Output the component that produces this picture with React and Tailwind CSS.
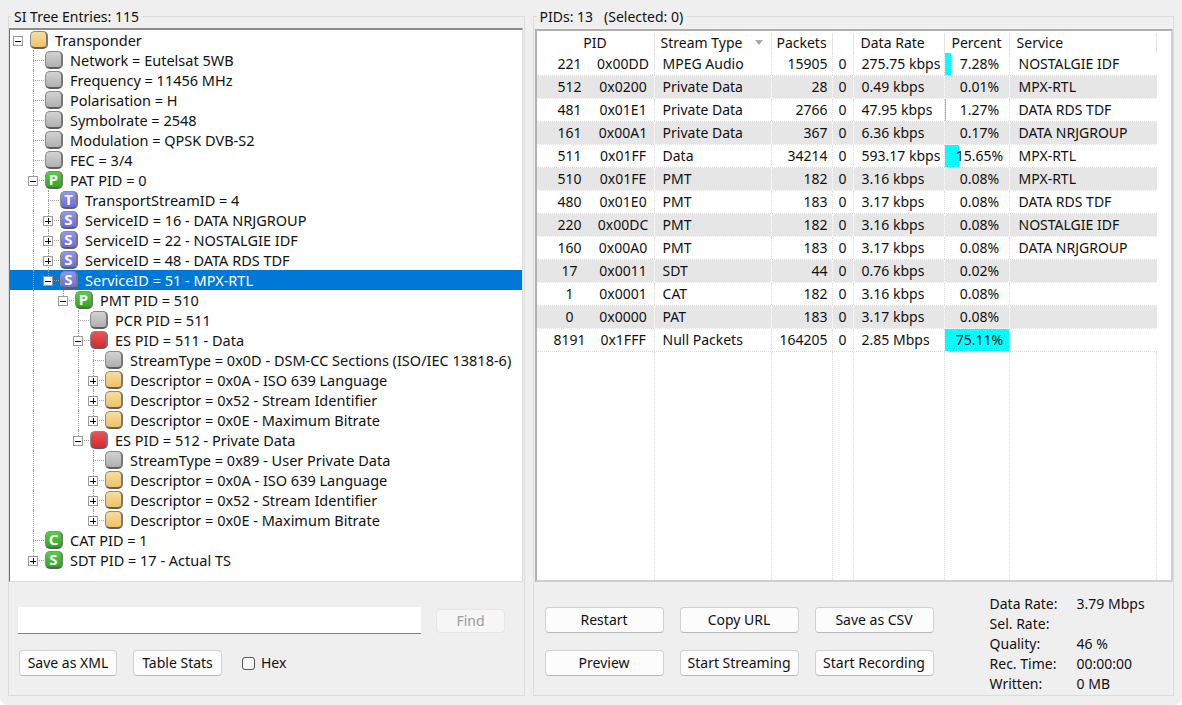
const treeRows = [
  { d: 0, open: true, kind: "orange", label: "Transponder" },
  { d: 1, kind: "gray", label: "Network = Eutelsat 5WB" },
  { d: 1, kind: "gray", label: "Frequency = 11456 MHz" },
  { d: 1, kind: "gray", label: "Polarisation = H" },
  { d: 1, kind: "gray", label: "Symbolrate = 2548" },
  { d: 1, kind: "gray", label: "Modulation = QPSK DVB-S2" },
  { d: 1, kind: "gray", label: "FEC = 3/4" },
  { d: 1, open: true, kind: "green", letter: "P", label: "PAT PID = 0" },
  { d: 2, kind: "purple", letter: "T", label: "TransportStreamID = 4" },
  { d: 2, open: false, kind: "purple", letter: "S", label: "ServiceID = 16 - DATA NRJGROUP" },
  { d: 2, open: false, kind: "purple", letter: "S", label: "ServiceID = 22 - NOSTALGIE IDF" },
  { d: 2, open: false, kind: "purple", letter: "S", label: "ServiceID = 48 - DATA RDS TDF" },
  { d: 2, open: true, kind: "purple", letter: "S", label: "ServiceID = 51 - MPX-RTL", selected: true },
  { d: 3, open: true, kind: "green", letter: "P", label: "PMT PID = 510" },
  { d: 4, kind: "gray", label: "PCR PID = 511" },
  { d: 4, open: true, kind: "red", label: "ES PID = 511 - Data" },
  { d: 5, kind: "gray", label: "StreamType = 0x0D - DSM-CC Sections (ISO/IEC 13818-6)" },
  { d: 5, open: false, kind: "orange", label: "Descriptor = 0x0A - ISO 639 Language" },
  { d: 5, open: false, kind: "orange", label: "Descriptor = 0x52 - Stream Identifier" },
  { d: 5, open: false, kind: "orange", label: "Descriptor = 0x0E - Maximum Bitrate" },
  { d: 4, open: true, kind: "red", label: "ES PID = 512 - Private Data" },
  { d: 5, kind: "gray", label: "StreamType = 0x89 - User Private Data" },
  { d: 5, open: false, kind: "orange", label: "Descriptor = 0x0A - ISO 639 Language" },
  { d: 5, open: false, kind: "orange", label: "Descriptor = 0x52 - Stream Identifier" },
  { d: 5, open: false, kind: "orange", label: "Descriptor = 0x0E - Maximum Bitrate" },
  { d: 1, kind: "green", letter: "C", label: "CAT PID = 1" },
  { d: 1, open: false, kind: "green", letter: "S", label: "SDT PID = 17 - Actual TS" },
];

const pids = [
  ["221", "0x00DD", "MPEG Audio", "15905", "275.75 kbps", 6, "7.28%", "NOSTALGIE IDF"],
  ["512", "0x0200", "Private Data", "28", "0.49 kbps", 0, "0.01%", "MPX-RTL"],
  ["481", "0x01E1", "Private Data", "2766", "47.95 kbps", 1, "1.27%", "DATA RDS TDF"],
  ["161", "0x00A1", "Private Data", "367", "6.36 kbps", 0, "0.17%", "DATA NRJGROUP"],
  ["511", "0x01FF", "Data", "34214", "593.17 kbps", 14, "15.65%", "MPX-RTL"],
  ["510", "0x01FE", "PMT", "182", "3.16 kbps", 0, "0.08%", "MPX-RTL"],
  ["480", "0x01E0", "PMT", "183", "3.17 kbps", 0, "0.08%", "DATA RDS TDF"],
  ["220", "0x00DC", "PMT", "182", "3.16 kbps", 0, "0.08%", "NOSTALGIE IDF"],
  ["160", "0x00A0", "PMT", "183", "3.17 kbps", 0, "0.08%", "DATA NRJGROUP"],
  ["17", "0x0011", "SDT", "44", "0.76 kbps", 0, "0.02%", ""],
  ["1", "0x0001", "CAT", "182", "3.16 kbps", 0, "0.08%", ""],
  ["0", "0x0000", "PAT", "183", "3.17 kbps", 0, "0.08%", ""],
  ["8191", "0x1FFF", "Null Packets", "164205", "2.85 Mbps", 64, "75.11%", ""],
];

const stats = [
  ["Data Rate:", "3.79 Mbps"],
  ["Sel. Rate:", ""],
  ["Quality:", "46 %"],
  ["Rec. Time:", "00:00:00"],
  ["Written:", "0 MB"],
];

const kindClass = {
  gray: "from-[#d2d2d2] to-[#b0b0b0]",
  orange: "from-[#f8dc9c] to-[#efc26a]",
  green: "from-[#5ccb48] to-[#2fa822]",
  purple: "from-[#9294f0] to-[#6a6cde]",
  red: "from-[#ee5256] to-[#d42c30]",
};

function hasNextSibling(index, level) {
  for (let j = index + 1; j < treeRows.length; j++) {
    if (treeRows[j].d < level) return false;
    if (treeRows[j].d === level) return true;
  }
  return false;
}

function Badge({ kind, letter }) {
  return (
    <div className={`w-[18px] h-[18px] shrink-0 rounded-[5px] border border-[#8a8a8a] border-b-2 border-b-[#5f5f5f] border-r-2 border-r-[#777777] bg-linear-to-b flex items-center justify-center text-white font-bold text-[15px] leading-none ${kindClass[kind]}`}>
      {letter}
    </div>
  );
}

function TreeRow({ row, index }) {
  const cells = [];
  for (let k = 0; k <= row.d; k++) {
    const own = k === row.d;
    const through = hasNextSibling(index, k);
    cells.push(
      <div key={k} className="relative w-[15px] h-5 shrink-0">
        {k > 0 && !own && through && <div className="absolute left-[8px] top-0 bottom-0 border-l border-dotted border-[#a0a0a0]" />}
        {k > 0 && own && <div className={`absolute left-[8px] top-0 border-l border-dotted border-[#a0a0a0] ${through ? "bottom-0" : "h-[10px]"}`} />}
        {k > 0 && own && <div className="absolute left-[8px] top-[10px] w-[11px] border-t border-dotted border-[#a0a0a0]" />}
        {own && row.open !== undefined && (
          <div className="absolute left-[3px] top-[6px] w-[10px] h-[10px] border border-[#9a9a9a] bg-white flex items-center justify-center">
            <div className="absolute w-[6px] h-px bg-black" />
            {!row.open && <div className="absolute w-px h-[6px] bg-black" />}
          </div>
        )}
      </div>
    );
  }
  return (
    <div className={`flex items-center h-5 ${row.selected ? "bg-[#0078d7]" : ""}`}>
      {cells}
      <div className="ml-[5px] mr-[7px]">
        <Badge kind={row.kind} letter={row.letter} />
      </div>
      <span className={`whitespace-nowrap ${row.selected ? "text-white" : ""}`}>{row.label}</span>
    </div>
  );
}

function Button({ children, className = "" }) {
  return (
    <button className={`h-[26px] rounded-[4px] border border-[#d0d0d0] border-b-[#b8b8b8] bg-[#fcfcfc] flex items-center justify-center whitespace-nowrap ${className}`}>
      {children}
    </button>
  );
}

const cell = "h-full shrink-0 border-r border-dotted flex items-center whitespace-nowrap";

function PidRow({ row, index }) {
  const gray = index % 2 === 1;
  const line = gray ? "border-white" : "border-[#dddddd]";
  return (
    <div className={`flex h-[23px] w-[620px] border-b border-dotted ${gray ? "bg-[#e6e6e6] border-b-white" : "border-b-[#dddddd]"}`}>
      <div className={`${cell} ${line} w-[118px]`}>
        <div className="w-[66px] text-center">{row[0]}</div>
        <div className="w-[51px] pr-[10px] flex justify-center">{row[1]}</div>
      </div>
      <div className={`${cell} ${line} w-[117px] pl-[8px]`}>{row[2]}</div>
      <div className={`${cell} ${line} w-[61px] justify-end pr-[4px]`}>{row[3]}</div>
      <div className={`${cell} ${line} w-[21px] justify-center`}>0</div>
      <div className={`${cell} ${line} w-[91px] pl-[8px]`}>{row[4]}</div>
      <div className={`${cell} ${line} w-[65px] justify-center pl-[6px] relative`}>
        {row[5] > 0 && <div className="absolute left-0 top-0 bottom-0 bg-[#00ffff]" style={{ width: row[5] }} />}
        <span className="relative">{row[6]}</span>
      </div>
      <div className="h-full flex-1 flex items-center pl-[9px] whitespace-nowrap">{row[7]}</div>
    </div>
  );
}

export default function App() {
  return (
    <div className="w-[1182px] h-[705px] bg-[#efefef] flex gap-2 px-2 pt-4 pb-[9px] text-[14px] leading-5 text-[#111111] overflow-hidden rounded-b-[8px] font-['Noto_Sans','Liberation_Sans',sans-serif]">
      <section className="relative w-[517px] border border-[#dcdcdc] flex flex-col">
        <div className="absolute -top-[8px] left-[2px] px-[3px] bg-[#efefef] leading-4">SI Tree Entries: 115</div>
        <div className="mt-[11px] mr-px h-[554px] bg-white border-t-2 border-l border-t-[#8c8c8c] border-l-[#6e6e6e] border-r border-b border-r-[#dcdcdc] border-b-[#dcdcdc] overflow-hidden text-[14.5px]">
          {treeRows.map((row, i) => <TreeRow key={i} row={row} index={i} />)}
        </div>
        <div className="flex-1 px-[9px] pt-[25px]">
          <div className="flex gap-[15px] items-center">
            <div className="w-[403px] h-[27px] bg-white border-b border-[#808080]" />
            <div className="w-[69px] h-6 rounded-[4px] border border-[#e6e6e6] bg-[#f6f6f6] flex items-center justify-center text-[#9c9c9c]">Find</div>
          </div>
          <div className="flex items-center mt-[16px] ml-px">
            <Button className="w-[98px]">Save as XML</Button>
            <Button className="w-[89px] ml-4">Table Stats</Button>
            <div className="w-[13px] h-[13px] ml-[20px] rounded-[3px] border border-[#555555] bg-[#f8f8f8]" />
            <span className="ml-[6px]">Hex</span>
          </div>
        </div>
      </section>

      <section className="relative w-[642px] border border-[#dcdcdc] flex flex-col">
        <div className="absolute -top-[8px] left-[3px] px-[3px] bg-[#efefef] leading-4 whitespace-pre">PIDs: 13   (Selected: 0)</div>
        <div className="mt-3 ml-px h-[553px] bg-white border-2 border-[#b0b0b0] border-b-[#cfcfcf] border-r-[#cfcfcf] overflow-hidden flex flex-col">
          <div className="flex h-[22px] w-[620px] shrink-0 pt-[2px]">
            <div className="w-[118px] border-r border-[#e4e4e4] flex items-center justify-center">PID</div>
            <div className="w-[117px] border-r border-[#e4e4e4] flex items-center pl-[6px] relative">
              Stream Type
              <div className="absolute right-[8px] top-[7px] w-0 h-0 border-l-[4px] border-r-[4px] border-t-[5px] border-l-transparent border-r-transparent border-t-[#a8a8a8]" />
            </div>
            <div className="w-[61px] border-r border-[#e4e4e4] flex items-center justify-center">Packets</div>
            <div className="w-[21px] border-r border-[#e4e4e4]" />
            <div className="w-[91px] border-r border-[#e4e4e4] flex items-center pl-[7px]">Data Rate</div>
            <div className="w-[65px] border-r border-[#e4e4e4] flex items-center justify-center">Percent</div>
            <div className="flex-1 border-r border-[#e4e4e4] flex items-center pl-[7px]">Service</div>
          </div>
          {pids.map((row, i) => <PidRow key={i} row={row} index={i} />)}
          <div className="flex flex-1 w-[620px]">
            <div className={`${cell} border-[#dddddd] w-[118px]`} />
            <div className={`${cell} border-[#dddddd] w-[117px]`} />
            <div className={`${cell} border-[#dddddd] w-[61px]`} />
            <div className={`${cell} border-[#dddddd] w-[21px]`} />
            <div className={`${cell} border-[#dddddd] w-[91px]`} />
            <div className={`${cell} border-[#dddddd] w-[65px]`} />
            <div className="h-full flex-1 border-r border-dotted border-[#dddddd]" />
          </div>
        </div>
        <div className="flex-1 flex pl-[11px] pt-[8px]">
          <div className="grid grid-cols-[119px_119px_119px] gap-x-4 gap-y-[17px] pt-[17px] content-start">
            <Button>Restart</Button>
            <Button>Copy URL</Button>
            <Button>Save as CSV</Button>
            <Button>Preview</Button>
            <Button>Start Streaming</Button>
            <Button>Start Recording</Button>
          </div>
          <div className="ml-[56px] grid grid-cols-[87px_1fr] content-start mt-[4px]">
            {stats.map(([name, value]) => (
              <div key={name} className="contents">
                <div className="h-5">{name}</div>
                <div className="h-5">{value}</div>
              </div>
            ))}
          </div>
        </div>
      </section>
    </div>
  );
}
